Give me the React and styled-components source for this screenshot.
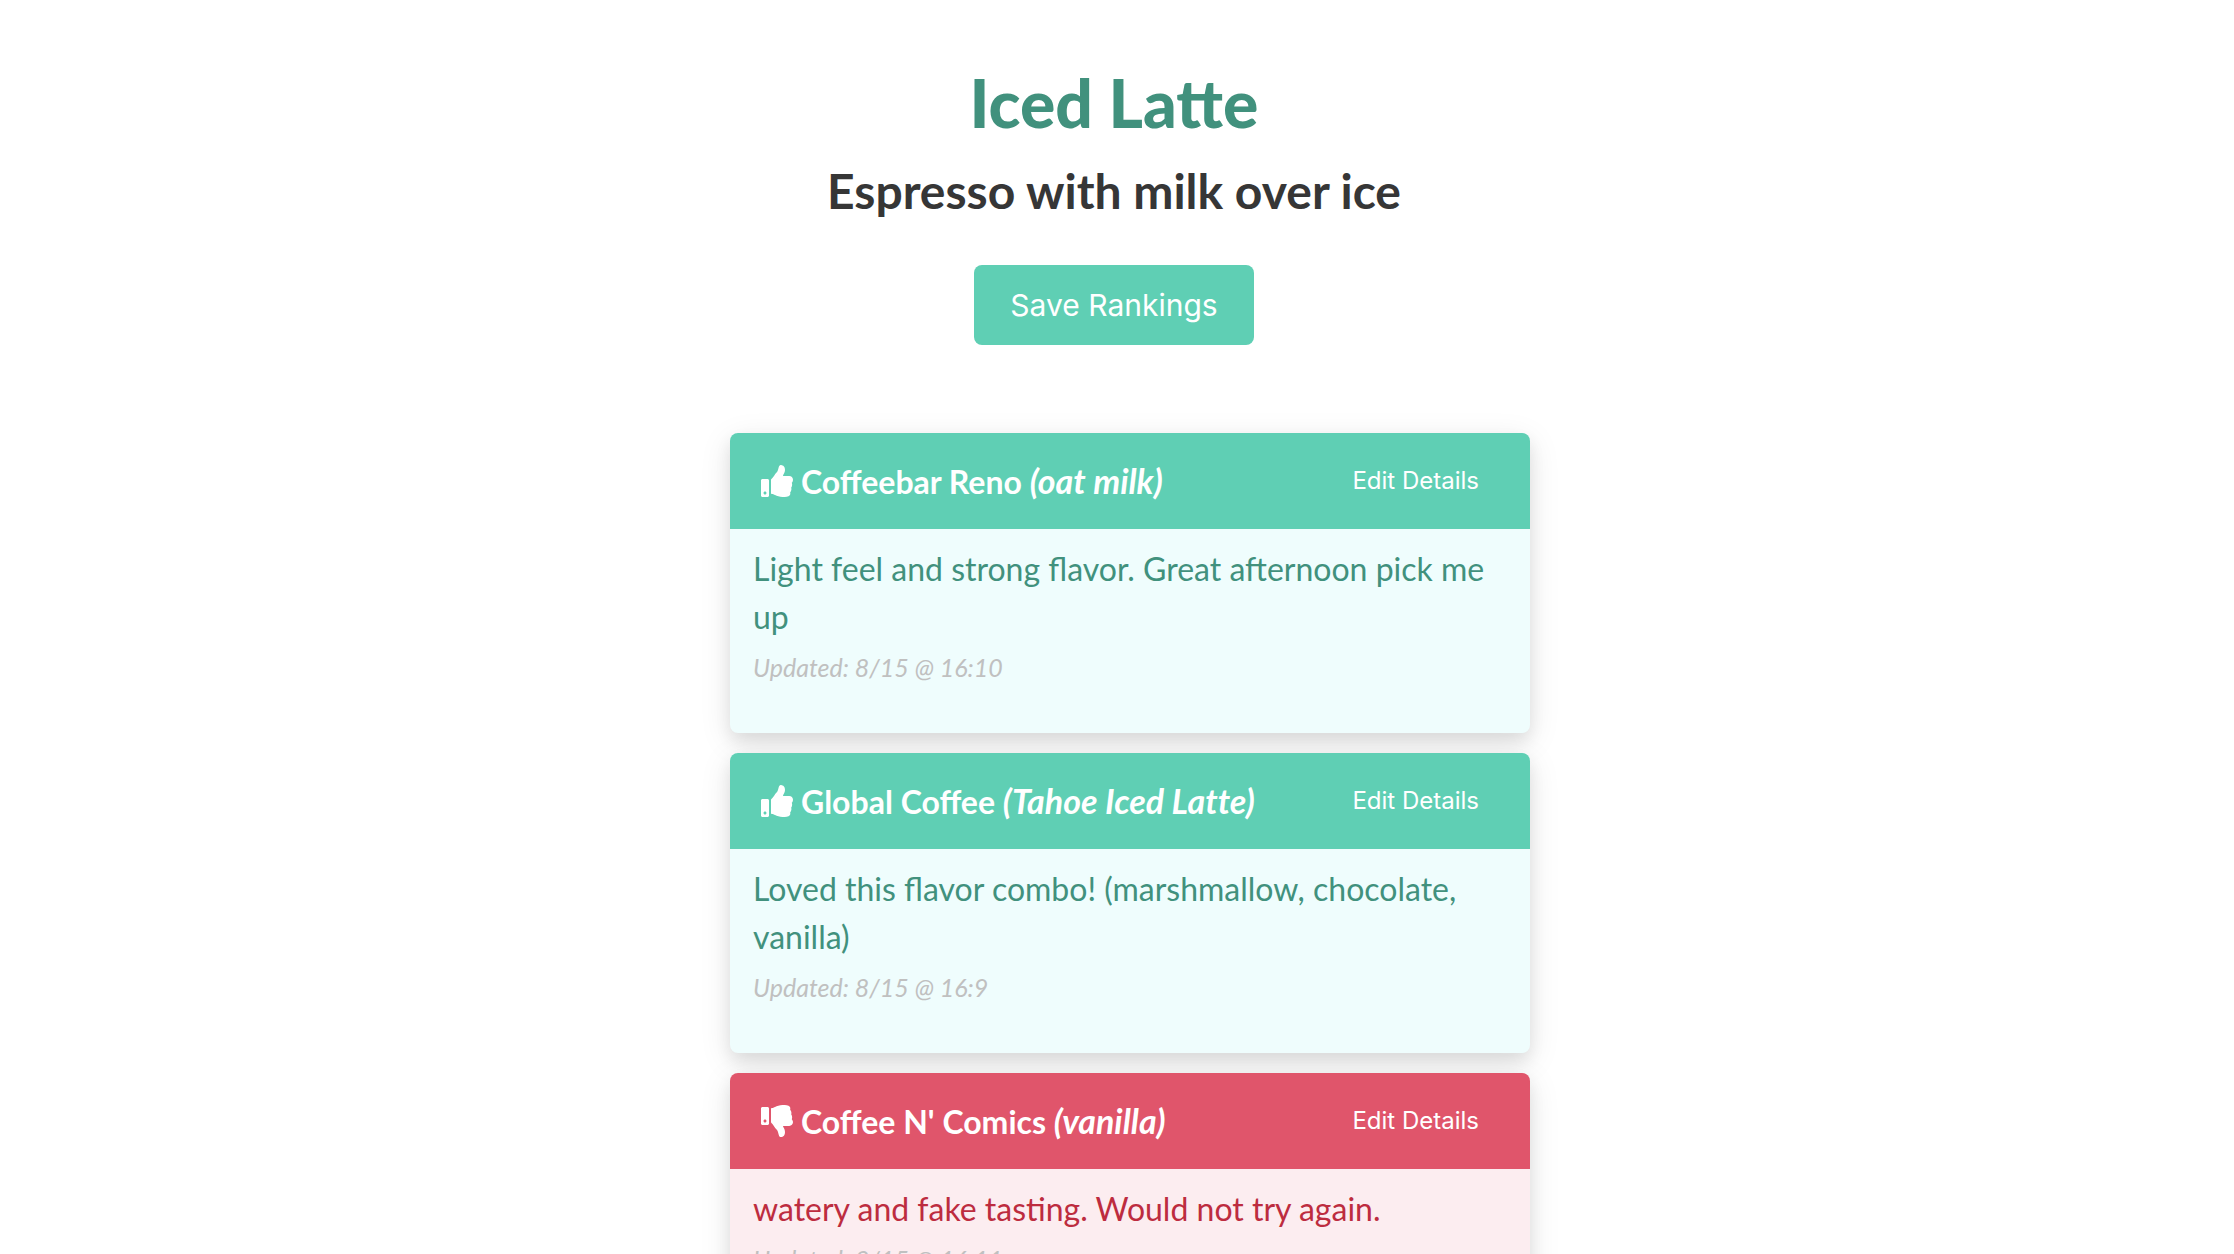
import React from 'react';
import styled, { createGlobalStyle } from 'styled-components';
import { FaThumbsUp, FaThumbsDown } from 'react-icons/fa';

const tones = {
  good: { header: '#5fcfb4', body: '#effdfd', text: '#41917d' },
  bad: { header: '#e0556b', body: '#fcedf0', text: '#bd2c3f' },
};

const GlobalStyle = createGlobalStyle`
  * { box-sizing: border-box; }
  body {
    margin: 0;
    background: #fff;
    font-family: Lato, sans-serif;
    overflow-x: hidden;
  }
`;

const Page = styled.main`
  display: flex;
  flex-direction: column;
  align-items: center;
  padding: 55px 6px 40px 0;
`;

const DrinkName = styled.h1`
  margin: 0;
  font-size: 66px;
  font-weight: 900;
  line-height: 96px;
  color: #41917d;
`;

const Description = styled.h2`
  margin: 8px 0 0;
  font-size: 48px;
  font-weight: 700;
  line-height: 64px;
  color: #363636;
`;

const SaveButton = styled.button`
  height: 80px;
  margin: 42px 0 0;
  padding: 0 36px;
  border: 0;
  border-radius: 8px;
  background: #5fcfb4;
  color: #fff;
  font-family: Inter, sans-serif;
  font-size: 30px;
  line-height: 48px;
  cursor: pointer;
`;

const Rankings = styled.ul`
  display: flex;
  flex-direction: column;
  gap: 20px;
  width: 100%;
  max-width: 832px;
  margin: 88px 0 0 32px;
  padding: 0 16px;
  list-style: none;
`;

const Card = styled.li`
  border-radius: 8px;
  background: ${({ $tone }) => tones[$tone].body};
  color: ${({ $tone }) => tones[$tone].text};
  box-shadow: 0 8px 32px rgba(0, 0, 0, 0.1), 0 8px 16px rgba(0, 0, 0, 0.08);
`;

const CardHeader = styled.header`
  display: flex;
  align-items: center;
  justify-content: space-between;
  height: 96px;
  padding: 0 24px 0 31px;
  border-radius: 8px 8px 0 0;
  background: ${({ $tone }) => tones[$tone].header};
  color: #fff;
`;

const Shop = styled.h3`
  display: flex;
  align-items: center;
  gap: 8px;
  margin: 0;
  font-size: 32px;
  font-weight: 700;
  line-height: 48px;
`;

const Variant = styled.em`
  font-size: 34px;
  font-variant-ligatures: none;
`;

const EditButton = styled.button`
  padding: 0 27px;
  border: 0;
  background: transparent;
  color: inherit;
  font-family: Inter, sans-serif;
  font-size: 24px;
  line-height: 36px;
  cursor: pointer;
`;

const CardBody = styled.div`
  padding: 16px 24px 48px 23px;
`;

const Notes = styled.p`
  margin: 0;
  font-size: 32px;
  line-height: 48px;
`;

const Updated = styled.p`
  margin: 8px 0 0;
  font-size: 25px;
  font-style: italic;
  line-height: 36px;
  color: #c0c0c0;
`;

const rankings = [
  { tone: 'good', shop: 'Coffeebar Reno', variant: 'oat milk', notes: 'Light feel and strong flavor. Great afternoon pick me up', updated: '8/15 @ 16:10' },
  { tone: 'good', shop: 'Global Coffee', variant: 'Tahoe Iced Latte', notes: 'Loved this flavor combo! (marshmallow, chocolate, vanilla)', updated: '8/15 @ 16:9' },
  { tone: 'bad', shop: "Coffee N' Comics", variant: 'vanilla', notes: 'watery and fake tasting. Would not try again.', updated: '8/15 @ 16:11' },
];

function RankingCard({ tone, shop, variant, notes, updated }) {
  const Thumb = tone === 'good' ? FaThumbsUp : FaThumbsDown;
  return (
    <Card $tone={tone}>
      <CardHeader $tone={tone}>
        <Shop>
          <Thumb size={32} aria-hidden="true" />
          <span>{shop} <Variant>({variant})</Variant></span>
        </Shop>
        <EditButton type="button">Edit Details</EditButton>
      </CardHeader>
      <CardBody>
        <Notes>{notes}</Notes>
        <Updated>Updated: {updated}</Updated>
      </CardBody>
    </Card>
  );
}

export default function App() {
  return (
    <>
      <GlobalStyle />
      <Page>
        <DrinkName>Iced Latte</DrinkName>
        <Description>Espresso with milk over ice</Description>
        <SaveButton type="button">Save Rankings</SaveButton>
        <Rankings>
          {rankings.map((item) => (
            <RankingCard key={item.shop} {...item} />
          ))}
        </Rankings>
      </Page>
    </>
  );
}
